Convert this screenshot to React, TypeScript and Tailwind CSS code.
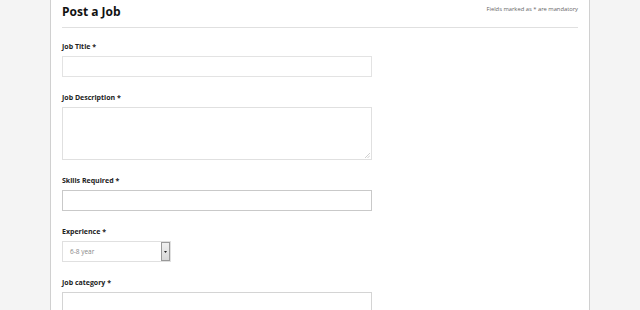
import React from "react";

function Label({ children }: { children: React.ReactNode }) {
  return (
    <div className="text-[7px] leading-[10px] font-bold text-[#222] mb-[4px]">{children}</div>
  );
}

export default function App() {
  return (
    <div className="min-h-[310px] h-[310px] overflow-hidden bg-[#f4f4f4] font-['Open_Sans',sans-serif]">
      <div className="mx-auto w-[540px] h-full bg-white border-x border-[#d0d0d0] px-[11px]">
        <div className="flex justify-between items-start h-[28px] border-b border-[#e0e0e0]">
          <h1 className="pt-[4px] text-[12px] leading-[16px] font-bold text-[#111]">Post a Job</h1>
          <div className="pt-[5px] text-[5.8px] leading-[8px] text-[#666]">Fields marked as * are mandatory</div>
        </div>
        <div className="pt-[14px] flex flex-col gap-[16px]">
          <div>
            <Label>Job Title *</Label>
            <input className="block w-[310px] h-[21px] border border-[#e3e3e3] bg-white outline-none" />
          </div>
          <div>
            <Label>Job Description *</Label>
            <div className="relative w-[310px] h-[53px]">
              <textarea className="block w-full h-full resize-none border border-[#e0e0e0] bg-white outline-none" />
              <svg className="absolute right-[2px] bottom-[2px]" width="5" height="5" viewBox="0 0 5 5">
                <path d="M5 0 L0 5 M5 2.5 L2.5 5" stroke="#bbb" strokeWidth="0.7" />
              </svg>
            </div>
          </div>
          <div>
            <Label>Skills Required *</Label>
            <input className="block w-[310px] h-[21px] border border-[#c9c9c9] bg-white outline-none" />
          </div>
          <div>
            <Label>Experience *</Label>
            <div className="flex w-[109px] h-[21px] border border-[#e0e0e0] bg-white">
              <div className="flex-1 pl-[7px] text-[6.5px] leading-[19px] text-[#888]">6-8 year</div>
              <div className="w-[9px] h-full border border-[#999] bg-gradient-to-b from-[#f0f0f0] to-[#d8d8d8] flex items-center justify-center">
                <svg width="3" height="2" viewBox="0 0 3 2">
                  <path d="M0 0 L3 0 L1.5 2 Z" fill="#222" />
                </svg>
              </div>
            </div>
          </div>
          <div>
            <Label>Job category *</Label>
            <input className="block w-[310px] h-[21px] border border-[#d4d4d4] bg-white outline-none" />
          </div>
        </div>
      </div>
    </div>
  );
}
